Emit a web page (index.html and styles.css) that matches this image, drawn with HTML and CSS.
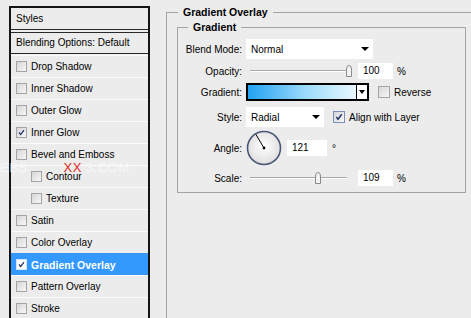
FILE: index.html
```html
<!DOCTYPE html>
<html lang="en">
<head>
  <meta charset="UTF-8">
  <title>Layer Style - Gradient Overlay</title>
  <link rel="stylesheet" href="styles.css">
</head>
<body>
  <!-- Styles list on the left -->
  <div class="styles-list">
    <div class="list-head">Styles</div>
    <div class="list-blend">Blending Options: Default</div>
    <div class="list-items">
      <div class="list-item"><span class="check"></span>Drop Shadow</div>
      <div class="list-item"><span class="check"></span>Inner Shadow</div>
      <div class="list-item"><span class="check"></span>Outer Glow</div>
      <div class="list-item"><span class="check on"><svg viewBox="0 0 11 11"><polyline points="2.5,5.5 4.5,8 8.5,2.5"/></svg></span>Inner Glow</div>
      <div class="list-item"><span class="check"></span>Bevel and Emboss</div>
      <div class="list-item sub"><span class="check"></span>Contour</div>
      <div class="list-item sub"><span class="check"></span>Texture</div>
      <div class="list-item"><span class="check"></span>Satin</div>
      <div class="list-item"><span class="check"></span>Color Overlay</div>
      <div class="list-item selected"><span class="check on"><svg viewBox="0 0 11 11"><polyline points="2.5,5.5 4.5,8 8.5,2.5"/></svg></span>Gradient Overlay</div>
      <div class="list-item"><span class="check"></span>Pattern Overlay</div>
      <div class="list-item"><span class="check"></span>Stroke</div>
    </div>
  </div>

  <!-- Gradient Overlay settings -->
  <div class="settings">
    <fieldset class="group outer">
      <legend>Gradient Overlay</legend>
      <fieldset class="group inner">
        <legend>Gradient</legend>

        <div class="row r-blend">
          <span class="lbl">Blend Mode:</span>
          <div class="select blend-select"><span>Normal</span><i class="arrow"></i></div>
        </div>

        <div class="row r-opacity">
          <span class="lbl">Opacity:</span>
          <div class="slider">
            <div class="track"></div>
            <svg class="thumb" style="left: 95px" viewBox="0 0 8 12"><path d="M1.5 4 Q1.5 0.5 4 0.5 Q6.5 0.5 6.5 4 V11.5 H1.5 Z"/></svg>
          </div>
          <div class="num">100</div>
          <span class="unit">%</span>
        </div>

        <div class="row r-grad">
          <span class="lbl">Gradient:</span>
          <div class="grad">
            <div class="grad-fill"></div>
            <div class="grad-drop"><i class="arrow"></i></div>
          </div>
          <span class="check big"></span>
          <span class="opt">Reverse</span>
        </div>

        <div class="row r-style">
          <span class="lbl">Style:</span>
          <div class="select style-select"><span>Radial</span><i class="arrow"></i></div>
          <span class="check big on"><svg viewBox="0 0 11 11"><polyline points="2.5,5.5 4.5,8 8.5,2.5"/></svg></span>
          <span class="opt">Align with Layer</span>
        </div>

        <div class="row r-angle">
          <span class="lbl">Angle:</span>
          <svg class="dial" viewBox="0 0 36 36">
            <defs>
              <radialGradient id="dialFill" cx="50%" cy="45%" r="55%">
                <stop offset="0" stop-color="#ffffff"/>
                <stop offset="1" stop-color="#dedede"/>
              </radialGradient>
            </defs>
            <circle cx="18" cy="18" r="16.5" fill="url(#dialFill)" stroke="#4c5878" stroke-width="1.6"/>
            <line x1="18" y1="18" x2="9.8" y2="4.3" stroke="#000" stroke-width="1"/>
            <circle cx="18" cy="18" r="1.4" fill="#000"/>
          </svg>
          <div class="num angle-num">121</div>
          <span class="deg">°</span>
        </div>

        <div class="row r-scale">
          <span class="lbl">Scale:</span>
          <div class="slider">
            <div class="track"></div>
            <svg class="thumb" style="left: 64px" viewBox="0 0 8 12"><path d="M1.5 4 Q1.5 0.5 4 0.5 Q6.5 0.5 6.5 4 V11.5 H1.5 Z"/></svg>
          </div>
          <div class="num">109</div>
          <span class="unit">%</span>
        </div>
      </fieldset>
    </fieldset>
  </div>

  <div class="watermark">EBS<span class="wm-red">XX</span>3.COM</div>
</body>
</html>
```

FILE: styles.css
```css
/* Global */
body {
  margin: 0;
  width: 471px;
  height: 318px;
  overflow: hidden;
  background-color: #ececec;
  font-family: "Liberation Sans", Arial, sans-serif;
  font-size: 10px;
  color: #000;
  display: flex;
  align-items: flex-start;
  position: relative;
}

/* Left styles list */
.styles-list {
  margin: 6px 0 0 9px;
  width: 141px;
  height: 312px;
  box-sizing: border-box;
  border: 2px solid #151515;
  border-bottom: 0;
  overflow: hidden;
  flex: none;
}

.list-head {
  height: 21px;
  line-height: 21px;
  padding-left: 5px;
  border-bottom: 1px solid #2a2a2a;
}

.list-blend {
  margin-top: 2px;
  height: 20px;
  line-height: 20px;
  padding-left: 5px;
  border-top: 1px solid #2a2a2a;
  border-bottom: 1px solid #2a2a2a;
}

.list-items {
  padding-top: 1px;
}

.list-item {
  height: 21px;
  border-top: 1px solid #fbfbfb;
  display: flex;
  align-items: center;
  padding-left: 5px;
}

.list-item.sub {
  padding-left: 20px;
}

.list-item.selected {
  background-color: #3399ff;
  border-top-color: #3399ff;
  color: #fff;
  font-weight: bold;
  font-size: 10.5px;
}

/* Checkboxes */
.check {
  width: 11px;
  height: 11px;
  box-sizing: border-box;
  border: 1px solid #a4a4a4;
  background: linear-gradient(135deg, #d6d6d6, #f7f7f7);
  margin-right: 4px;
  flex: none;
  display: inline-flex;
}

.check svg {
  width: 100%;
  height: 100%;
}

.check polyline {
  fill: none;
  stroke: #24336b;
  stroke-width: 1.6;
}

.check.big {
  width: 12px;
  height: 12px;
  margin-left: 9px;
}

.check.big.on {
  border-color: #7d8fb8;
}

.list-item.selected .check {
  background: #fff;
  border-color: #d0e4ff;
}

/* Right settings */
.settings {
  margin: 6px 0 0 16px;
  flex: none;
}

.group {
  margin: 0;
  border: 1px solid #a3a3a3;
  min-width: 0;
}

.group legend {
  font-weight: bold;
  font-size: 10.5px;
  line-height: 13px;
  padding: 0 5px;
}

.outer {
  width: 311px;
  height: 312px;
  box-sizing: border-box;
  padding: 2px 10px 0 10px;
  border-bottom: 0;
}

.outer > legend {
  margin-left: 1px;
}

.inner {
  width: 289px;
  box-sizing: border-box;
  padding: 5px 0 6px 0;
}

.inner > legend {
  margin-left: 10px;
}

/* Rows */
.row {
  display: flex;
  align-items: center;
}

.lbl {
  width: 64px;
  margin-right: 4px;
  text-align: right;
  flex: none;
}

.r-blend { height: 20px; margin-bottom: 4px; }
.r-opacity { height: 16px; margin-bottom: 4px; }
.r-grad { height: 18px; margin-bottom: 6px; }
.r-style { height: 20px; margin-bottom: 3px; }
.r-angle { height: 36px; margin-bottom: 4px; }
.r-scale { height: 16px; }

/* Drop-down boxes */
.select {
  height: 20px;
  box-sizing: border-box;
  background-color: #fff;
  display: flex;
  align-items: center;
  padding-left: 5px;
  padding-right: 4px;
}

.blend-select { width: 127px; }
.style-select { width: 78px; }

.arrow {
  margin-left: auto;
  width: 0;
  height: 0;
  border-left: 4px solid transparent;
  border-right: 4px solid transparent;
  border-top: 4px solid #000;
}

/* Sliders */
.slider {
  width: 97px;
  height: 16px;
  margin-left: 4px;
  position: relative;
  flex: none;
}

.track {
  margin-top: 7px;
  height: 0;
  border-top: 1px solid #a8a8a8;
  border-bottom: 1px solid #fff;
}

.thumb {
  position: absolute;
  top: 2px;
  width: 8px;
  height: 12px;
}

.thumb path {
  fill: #f2f2f2;
  stroke: #8a8a8a;
  stroke-width: 1;
}

/* Number fields */
.num {
  width: 35px;
  height: 16px;
  line-height: 16px;
  box-sizing: border-box;
  background-color: #fff;
  padding-left: 5px;
  margin-left: 11px;
  flex: none;
}

.unit {
  margin-left: 4px;
}

.angle-num {
  width: 40px;
  margin-left: 5px;
}

.deg {
  margin-left: 5px;
}

/* Gradient picker */
.grad {
  width: 123px;
  height: 18px;
  box-sizing: border-box;
  border: 2px solid #000;
  display: flex;
}

.grad-fill {
  flex: 1;
  background: linear-gradient(to right, #22a2f2, #9fdcfb 55%, #eaf8ff);
}

.grad-drop {
  width: 10px;
  border-left: 1px solid #000;
  background-color: #fff;
  display: flex;
  align-items: center;
  justify-content: center;
}

.grad-drop .arrow {
  margin-left: 0;
  border-left-width: 3px;
  border-right-width: 3px;
}

.dial {
  width: 36px;
  height: 36px;
  flex: none;
}

/* Watermark stamped over the screenshot */
.watermark {
  position: absolute;
  left: 0;
  top: 160px;
  font-size: 13px;
  line-height: 15px;
  letter-spacing: 0.5px;
  color: rgba(255, 255, 255, 0.6);
}

.wm-red {
  color: #e0281e;
  margin: 0 4px 0 36px;
}
```
